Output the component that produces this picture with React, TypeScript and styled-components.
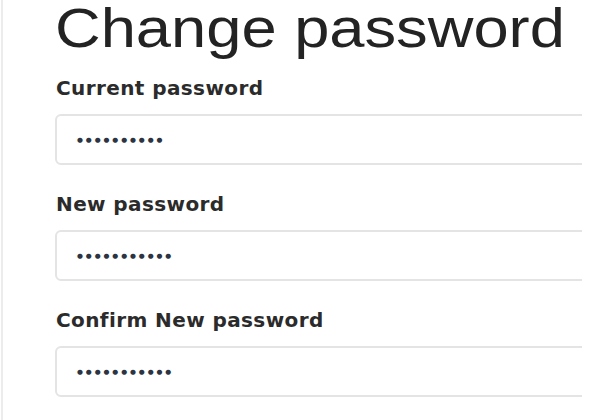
import React from "react";
import styled, { createGlobalStyle } from "styled-components";

const Global = createGlobalStyle`
  html, body { margin: 0; padding: 0; background: #ffffff; }
  body { font-family: "Liberation Sans", Arial, sans-serif; }
`;

const Page = styled.div`
  width: 591px;
  height: 420px;
  box-sizing: border-box;
  border-left: 2px solid #ececec;
  margin-left: 1px;
  padding-left: 52px;
  padding-top: 1px;
  overflow: hidden;
`;

const Title = styled.h1`
  margin: -5px 0 0 0;
  width: fit-content;
  font-family: "Liberation Sans", Arial, sans-serif;
  font-weight: 400;
  font-size: 55px;
  line-height: 64px;
  color: #232323;
  white-space: nowrap;
  transform: scaleX(1.15);
  transform-origin: left center;
`;

const Form = styled.div`
  display: flex;
  flex-direction: column;
  margin-top: 16px;
  width: 527px;
  overflow: hidden;
`;

const Field = styled.div`
  display: flex;
  flex-direction: column;
  margin-bottom: 27px;
`;

const Label = styled.label`
  font-family: "DejaVu Sans", sans-serif;
  font-weight: 700;
  font-size: 20px;
  letter-spacing: 0.4px;
  line-height: 24px;
  color: #2b2b2b;
  margin-bottom: 14px;
  margin-left: 1px;
  white-space: nowrap;
`;

const InputBox = styled.div`
  width: 560px;
  height: 51px;
  box-sizing: border-box;
  border: 2px solid #e4e4e4;
  border-radius: 6px;
  display: flex;
  align-items: center;
  padding-left: 20px;
`;

const Dots = styled.span`
  font-family: "DejaVu Sans", sans-serif;
  font-size: 6.8px;
  letter-spacing: 2.9px;
  color: #2c3442;
  font-weight: 700;
`;

const fields = [
  { label: "Current password", count: 10 },
  { label: "New password", count: 11 },
  { label: "Confirm New password", count: 11 },
];

export default function App() {
  return (
    <Page>
      <Global />
      <Title>Change password</Title>
      <Form>
        {fields.map((f) => (
          <Field key={f.label}>
            <Label>{f.label}</Label>
            <InputBox>
              <Dots>{"●".repeat(f.count)}</Dots>
            </InputBox>
          </Field>
        ))}
      </Form>
    </Page>
  );
}
